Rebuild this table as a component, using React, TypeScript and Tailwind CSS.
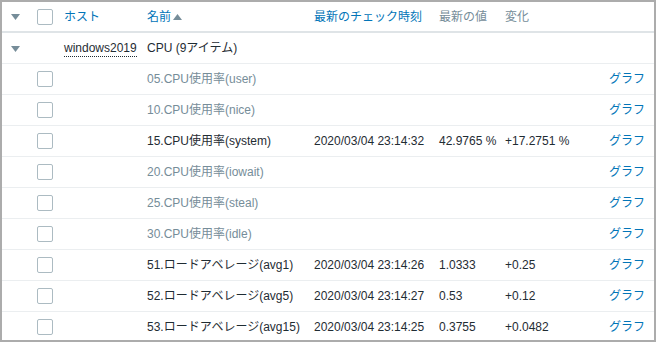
const font = { fontFamily: '"Liberation Sans", Arial, "Noto Sans CJK JP", sans-serif' };

type Item = {
  name: string
  time?: string
  value?: string
  change?: string
}

const items: Item[] = [
  { name: '05.CPU使用率(user)' },
  { name: '10.CPU使用率(nice)' },
  { name: '15.CPU使用率(system)', time: '2020/03/04 23:14:32', value: '42.9765 %', change: '+17.2751 %' },
  { name: '20.CPU使用率(iowait)' },
  { name: '25.CPU使用率(steal)' },
  { name: '30.CPU使用率(idle)' },
  { name: '51.ロードアベレージ(avg1)', time: '2020/03/04 23:14:26', value: '1.0333', change: '+0.25' },
  { name: '52.ロードアベレージ(avg5)', time: '2020/03/04 23:14:27', value: '0.53', change: '+0.12' },
  { name: '53.ロードアベレージ(avg15)', time: '2020/03/04 23:14:25', value: '0.3755', change: '+0.0482' },
];

const Caret = () => (
  <svg width="9" height="6" viewBox="0 0 9 6" className="inline-block">
    <path d="M0 0 L9 0 L4.5 6 Z" fill="#768d99" />
  </svg>
);

const Checkbox = () => (
  <div className="w-4 h-4 border border-[#acbbc2] rounded-[2px] bg-white"></div>
);

export default function App() {
  return (
    <div className="w-[656px] h-[342px] bg-white border-2 border-[#acacac] overflow-hidden text-[12px] text-[#1f2c33]" style={font}>
      <table className="w-full border-collapse table-fixed">
        <colgroup>
          <col className="w-[28px]" />
          <col className="w-[30px]" />
          <col className="w-[83px]" />
          <col className="w-[167px]" />
          <col className="w-[125px]" />
          <col className="w-[66px]" />
          <col className="w-[90px]" />
          <col />
        </colgroup>
        <thead>
          <tr className="h-[30px] border-b-2 border-[#dfe4e7]">
            <th className="pl-[9px] text-left font-normal"><Caret /></th>
            <th className="font-normal"><div className="ml-[7px]"><Checkbox /></div></th>
            <th className="pl-[4px] text-left font-normal text-[#0275b8]">ホスト</th>
            <th className="pl-[4px] text-left font-normal text-[#0275b8]">
              名前
              <svg width="9" height="6" viewBox="0 0 9 6" className="inline-block ml-[2px] mb-[1px]">
                <path d="M0 6 L9 6 L4.5 0 Z" fill="#768d99" />
              </svg>
            </th>
            <th className="pl-[4px] text-left font-normal text-[#0275b8]">最新のチェック時刻</th>
            <th className="pl-[4px] text-left font-normal text-[#768d99]">最新の値</th>
            <th className="pl-[4px] text-left font-normal text-[#768d99]">変化</th>
            <th></th>
          </tr>
        </thead>
        <tbody>
          <tr className="h-[31px] border-b border-[#ebeef0]">
            <td className="pl-[9px]"><Caret /></td>
            <td></td>
            <td className="pl-[4px]">
              <span className="border-b border-dotted border-[#1f2c33] pb-[1px]">windows2019</span>
            </td>
            <td className="pl-[4px]">CPU <span>(9アイテム)</span></td>
            <td colSpan={4}></td>
          </tr>
          {items.map((item) => {
            const dim = !item.time;
            return (
              <tr key={item.name} className="h-[31px] border-b border-[#ebeef0]">
                <td></td>
                <td><div className="ml-[7px]"><Checkbox /></div></td>
                <td></td>
                <td className={`pl-[4px] whitespace-nowrap ${dim ? 'text-[#768d99]' : ''}`}>{item.name}</td>
                <td className="pl-[4px] whitespace-nowrap">{item.time}</td>
                <td className="pl-[4px] whitespace-nowrap">{item.value}</td>
                <td className="pl-[4px] whitespace-nowrap">{item.change}</td>
                <td className="pr-[9px] text-right text-[#0275b8]">グラフ</td>
              </tr>
            )
          })}
        </tbody>
      </table>
    </div>
  )
}
